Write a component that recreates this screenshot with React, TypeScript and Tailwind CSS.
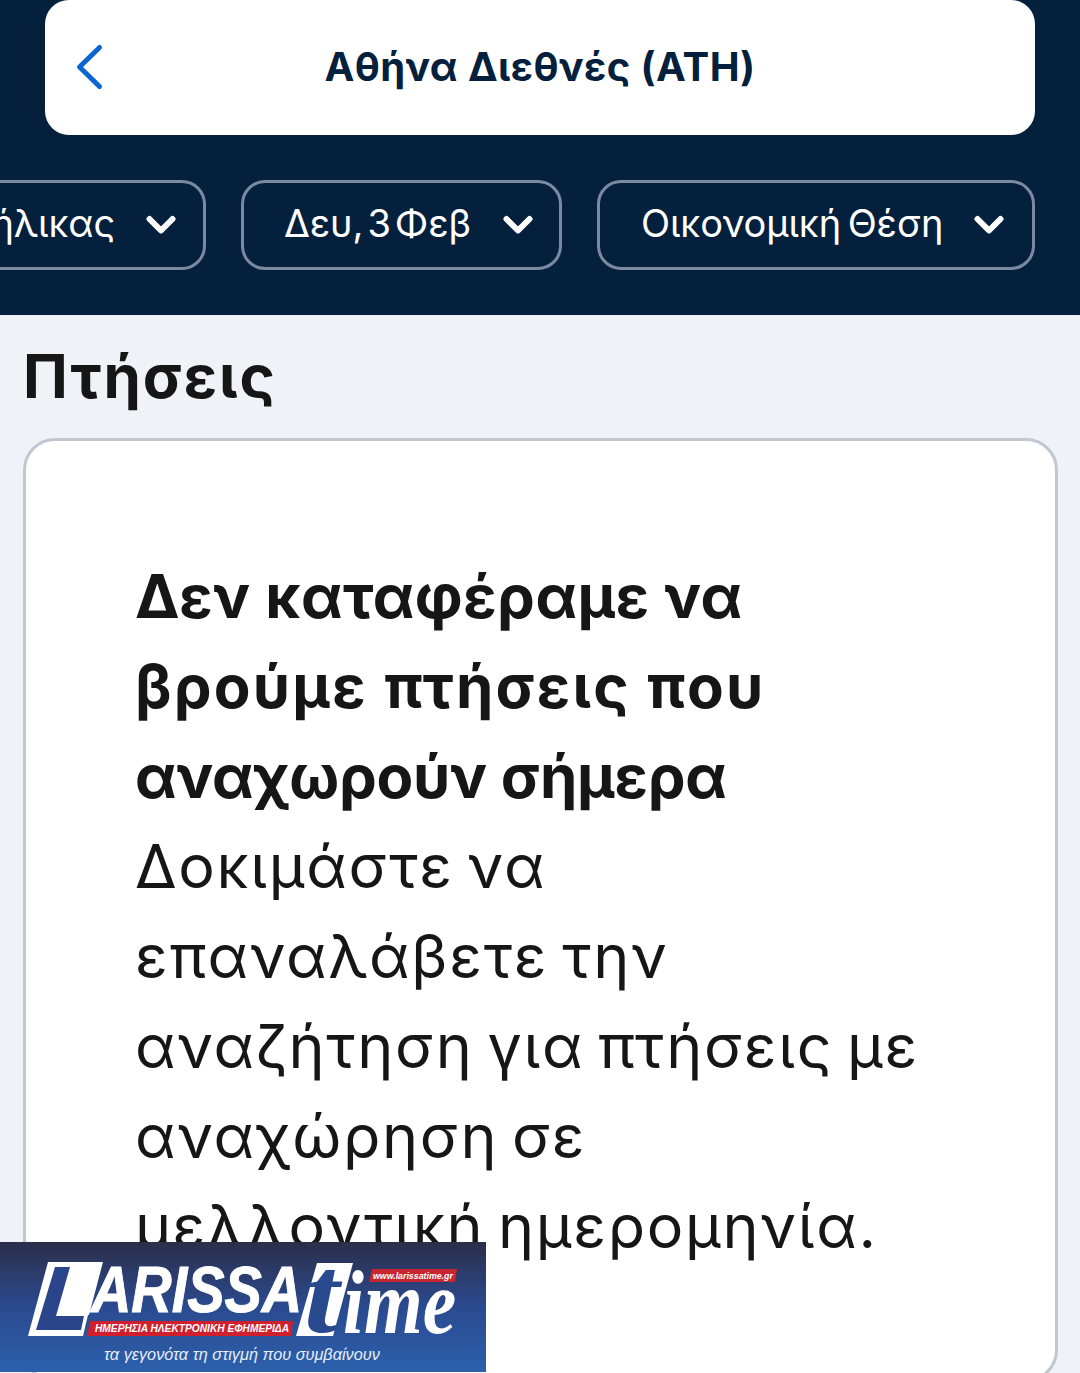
import React from "react";

function Chevron() {
  return (
    <svg width="30" height="20" viewBox="0 0 30 20" className="shrink-0">
      <path d="M3.5 4 L15 15.5 L26.5 4" fill="none" stroke="#fff" strokeWidth="6" strokeLinecap="round" strokeLinejoin="round" />
    </svg>
  );
}

function Chip({ label, className, textClass }: { label: string; className: string; textClass: string }) {
  return (
    <div className={`flex items-center h-[90px] rounded-[24px] border-[3px] border-[#7b8aa0] shrink-0 ${className}`}>
      <span className={`text-[38px] -mt-[3px] text-white whitespace-nowrap tracking-[-0.1px] ${textClass}`}>{label}</span>
      <Chevron />
    </div>
  );
}

function Logo() {
  return (
    <div className="absolute left-0 top-[1242px] w-[486px] h-[130px] overflow-hidden bg-gradient-to-b from-[#2a2e4a] via-[#2a4a90] to-[#2c60ac] font-['Liberation_Sans',sans-serif]">
      <svg width="486" height="130" viewBox="0 0 486 130" className="absolute left-0 top-0">
        <path d="M48 20 H103 L89 73 H88 L83 94 H28 Z" fill="#fff" />
        <path d="M55 25 H70 L56 74 H84 L81 88 H36 Z" fill="#2a458a" />
        <path d="M317 21 H353 L333 94 H296 Z" fill="#fff" />
        <path d="M90 79 H293 L291 94 H87 Z" fill="#d0202e" />
        <path d="M372 27 H457 L455 40 H369 Z" fill="#c7252f" />
      </svg>
      <span className="absolute left-[91px] top-[15px] origin-left scale-x-[0.86] text-[65px] leading-[65px] font-bold italic text-white [-webkit-text-stroke:1px_white] whitespace-nowrap">ARISSA</span>
      <span className="absolute left-[304px] top-[-2px] origin-left scale-x-[1.15] text-[110px] leading-[110px] font-bold italic text-[#2a4a90] font-['Liberation_Serif',serif] whitespace-nowrap">t</span>
      <span className="absolute left-[343px] top-[14px] origin-left scale-x-[0.82] text-[92px] leading-[92px] font-bold italic text-white font-['Liberation_Serif',serif] whitespace-nowrap">ime</span>
      <span className="absolute left-[95px] top-[80px] text-[10.2px] leading-[13px] font-bold italic text-white whitespace-nowrap">ΗΜΕΡΗΣΙΑ ΗΛΕΚΤΡΟΝΙΚΗ ΕΦΗΜΕΡΙΔΑ</span>
      <span className="absolute left-[373px] top-[28px] text-[8.8px] leading-[12px] font-bold italic text-white whitespace-nowrap">www.larissatime.gr</span>
      <span className="absolute left-[104px] top-[103px] text-[16.3px] leading-[18px] italic text-[#e8eef8] whitespace-nowrap">τα γεγονότα τη στιγμή που συμβαίνουν</span>
    </div>
  );
}

export default function App() {
  return (
    <div className="relative w-[1080px] h-[1373px] overflow-hidden bg-[#eff3f8] font-['Inter',sans-serif]">
      <header className="h-[315px] bg-[#05203c] flex flex-col items-end pr-[45px]">
        <div className="relative w-[990px] h-[135px] bg-white rounded-[24px] flex items-center justify-center">
          <svg width="32" height="50" viewBox="0 0 32 50" className="absolute left-[29px] top-[42px]">
            <path d="M25.5 5.5 L5.5 25 L25.5 44.5" fill="none" stroke="#0c66d2" strokeWidth="5" strokeLinecap="round" strokeLinejoin="round" />
          </svg>
          <span className="text-[40px] leading-[48px] -mt-[2px] font-bold text-[#05203c] whitespace-nowrap tracking-[0.4px]">Αθήνα Διεθνές (ATH)</span>
        </div>
        <div className="flex justify-end gap-[35px] mt-[45px]">
          <div className="flex items-center h-[90px] w-[206px] rounded-r-[24px] border-y-[3px] border-r-[3px] border-[#7b8aa0] gap-[31px] justify-end pr-[27px] overflow-hidden shrink-0">
            <span className="text-[38px] -mt-[3px] text-white whitespace-nowrap tracking-[-0.1px]">ήλικας</span>
            <Chevron />
          </div>
          <Chip label="Δευ, 3 Φεβ" className="w-[321px] pl-[40px] gap-[32px]" textClass="[word-spacing:-6.5px]" />
          <Chip label="Οικονομική Θέση" className="w-[438px] pl-[41px] gap-[31px]" textClass="[word-spacing:-4px]" />
        </div>
      </header>
      <main className="pl-[23px]">
        <h1 className="text-[60px] leading-[72px] font-bold text-[#161616] mt-[25px] tracking-[1.9px]">Πτήσεις</h1>
        <section className="mt-[26px] w-[1035px] h-[944px] bg-white rounded-[32px] border-[3px] border-[#c1c7d0] pl-[109px] pr-[100px] pt-[110px] text-[60px] leading-[90px] text-[#161616]">
          <p className="font-bold">
            <span className="block tracking-[0.47px]">Δεν καταφέραμε να</span>
            <span className="block tracking-[2.2px]">βρούμε πτήσεις που</span>
            <span className="block tracking-[-0.25px]">αναχωρούν σήμερα</span>
          </p>
          <p className="text-[61px] tracking-[1.7px] [word-spacing:-5px]">
            Δοκιμάστε να<br />
            επαναλάβετε την<br />
            αναζήτηση για πτήσεις με<br />
            αναχώρηση σε<br />
            μελλοντική ημερομηνία.
          </p>
        </section>
      </main>
      <Logo />
    </div>
  );
}
